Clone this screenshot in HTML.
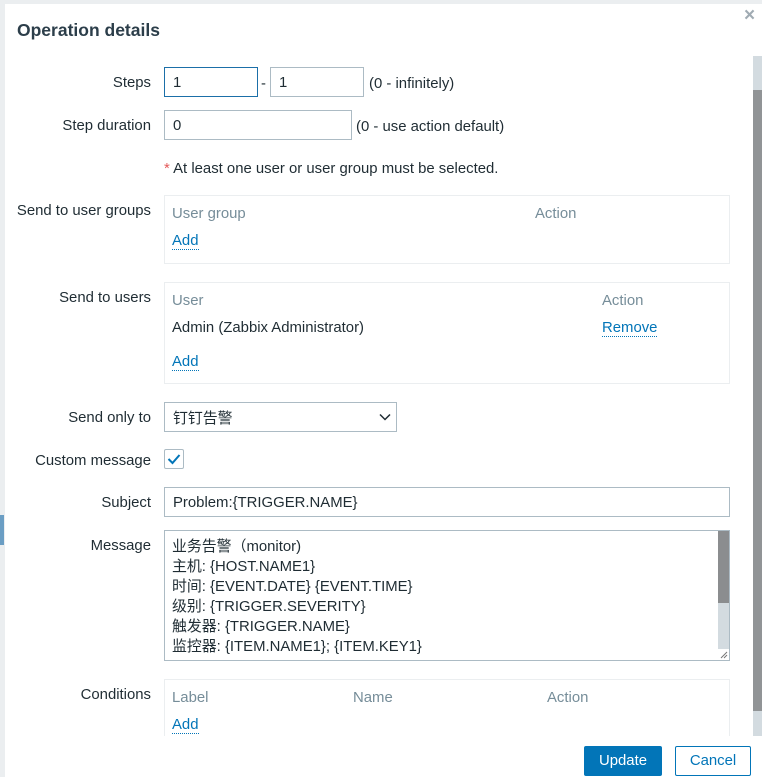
<!DOCTYPE html>
<html><head><meta charset="utf-8"><style>
*{box-sizing:border-box;margin:0;padding:0}
body{width:762px;height:777px;overflow:hidden;background:#fff;font-family:"Liberation Sans","Noto Sans CJK SC",sans-serif;font-size:14.9px;color:#1f2c33;position:relative}
.a{position:absolute;white-space:nowrap}
.lbl{position:absolute;right:611px;text-align:right;white-space:nowrap}
.in{position:absolute;border:1px solid #acbbc4;background:#fff;padding-left:8px;display:flex;align-items:center;padding-top:1px}
.box{position:absolute;border:1px solid #ebeef0;background:#fff}
.g{color:#768d99}
.lnk{color:#0275b8;border-bottom:1px dotted #0275b8;line-height:16px}
</style></head><body>
<div class="a" style="left:0;top:0;width:5px;height:777px;background:#ebeef0"></div>
<div class="a" style="left:0;top:515px;width:4px;height:30px;background:#6b9ec4"></div>
<div class="a" style="left:5px;top:0;width:757px;height:4px;background:#ebeef0"></div>
<div class="a" style="left:17px;top:20px;font-size:17.5px;font-weight:bold;color:#2c3e4a">Operation details</div>
<div class="a" style="left:744px;top:5px;font-size:19px;color:#a0abb3;font-weight:bold">×</div>
<div class="a" style="left:753px;top:56px;width:9px;height:680px;background:#d3dbe0"></div>
<div class="a" style="left:753px;top:90px;width:9px;height:621px;background:#919496"></div>

<div class="lbl" style="top:75px">Steps</div>
<div class="in" style="left:164px;top:67px;width:94px;height:30px;border-color:#1b6fa8">1</div>
<div class="a" style="left:261px;top:76px">-</div>
<div class="in" style="left:270px;top:67px;width:94px;height:30px">1</div>
<div class="a" style="left:369px;top:76px">(0 - infinitely)</div>

<div class="lbl" style="top:118px">Step duration</div>
<div class="in" style="left:164px;top:110px;width:188px;height:30px">0</div>
<div class="a" style="left:356px;top:119px">(0 - use action default)</div>

<div class="a" style="left:164px;top:161px"><span style="color:#e45959">*</span> At least one user or user group must be selected.</div>

<div class="lbl" style="top:203px">Send to user groups</div>
<div class="box" style="left:164px;top:195px;width:566px;height:69px"></div>
<div class="a g" style="left:172px;top:206px">User group</div>
<div class="a g" style="left:535px;top:206px">Action</div>
<div class="a lnk" style="left:172px;top:233px">Add</div>

<div class="lbl" style="top:290px">Send to users</div>
<div class="box" style="left:164px;top:282px;width:566px;height:102px"></div>
<div class="a g" style="left:172px;top:293px">User</div>
<div class="a g" style="left:602px;top:293px">Action</div>
<div class="a" style="left:172px;top:320px">Admin (Zabbix Administrator)</div>
<div class="a lnk" style="left:602px;top:320px">Remove</div>
<div class="a lnk" style="left:172px;top:354px">Add</div>

<div class="lbl" style="top:410px">Send only to</div>
<div class="in" style="left:164px;top:402px;width:233px;height:30px">钉钉告警</div>
<svg class="a" style="left:379px;top:413px" width="12" height="8"><path d="M1 1.5L6 6.5L11 1.5" fill="none" stroke="#1f2c33" stroke-width="1.5"/></svg>

<div class="lbl" style="top:453px">Custom message</div>
<div class="a" style="left:164px;top:449px;width:20px;height:20px;border:1px solid #acbbc4;border-radius:2px"></div>
<svg class="a" style="left:166px;top:452px" width="16" height="14"><path d="M2.5 7L6.5 11L13.5 3" fill="none" stroke="#0275b8" stroke-width="2"/></svg>

<div class="lbl" style="top:495px">Subject</div>
<div class="in" style="left:164px;top:487px;width:566px;height:30px">Problem:{TRIGGER.NAME}</div>

<div class="lbl" style="top:538px">Message</div>
<div class="a" style="left:164px;top:530px;width:566px;height:131px;border:1px solid #acbbc4"></div>
<div class="a" style="left:718px;top:531px;width:11px;height:118px;background:#d3dbe0"></div>
<div class="a" style="left:718px;top:531px;width:11px;height:72px;background:#8b8d8f"></div>
<svg class="a" style="left:720px;top:651px" width="8" height="8"><path d="M1 7L7 1M4 7L7 4" stroke="#777" stroke-width="1"/></svg>
<div class="a" style="left:172px;top:537px;line-height:20px">业务告警（monitor)<br>主机: {HOST.NAME1}<br>时间: {EVENT.DATE} {EVENT.TIME}<br>级别: {TRIGGER.SEVERITY}<br>触发器: {TRIGGER.NAME}<br>监控器: {ITEM.NAME1}; {ITEM.KEY1}</div>

<div class="lbl" style="top:687px">Conditions</div>
<div class="box" style="left:164px;top:679px;width:566px;height:70px;border-bottom:none"></div>
<div class="a g" style="left:172px;top:690px">Label</div>
<div class="a g" style="left:353px;top:690px">Name</div>
<div class="a g" style="left:547px;top:690px">Action</div>
<div class="a lnk" style="left:172px;top:717px">Add</div>
<div class="a" style="left:5px;top:736px;width:757px;height:41px;background:#fff"></div>

<div class="a" style="left:584px;top:746px;width:78px;height:30px;background:#0275b8;border-radius:2px;color:#fff;text-align:center;line-height:31px">Update</div>
<div class="a" style="left:675px;top:746px;width:76px;height:30px;border:1px solid #0275b8;border-radius:2px;color:#0275b8;text-align:center;line-height:29px">Cancel</div>
</body></html>
